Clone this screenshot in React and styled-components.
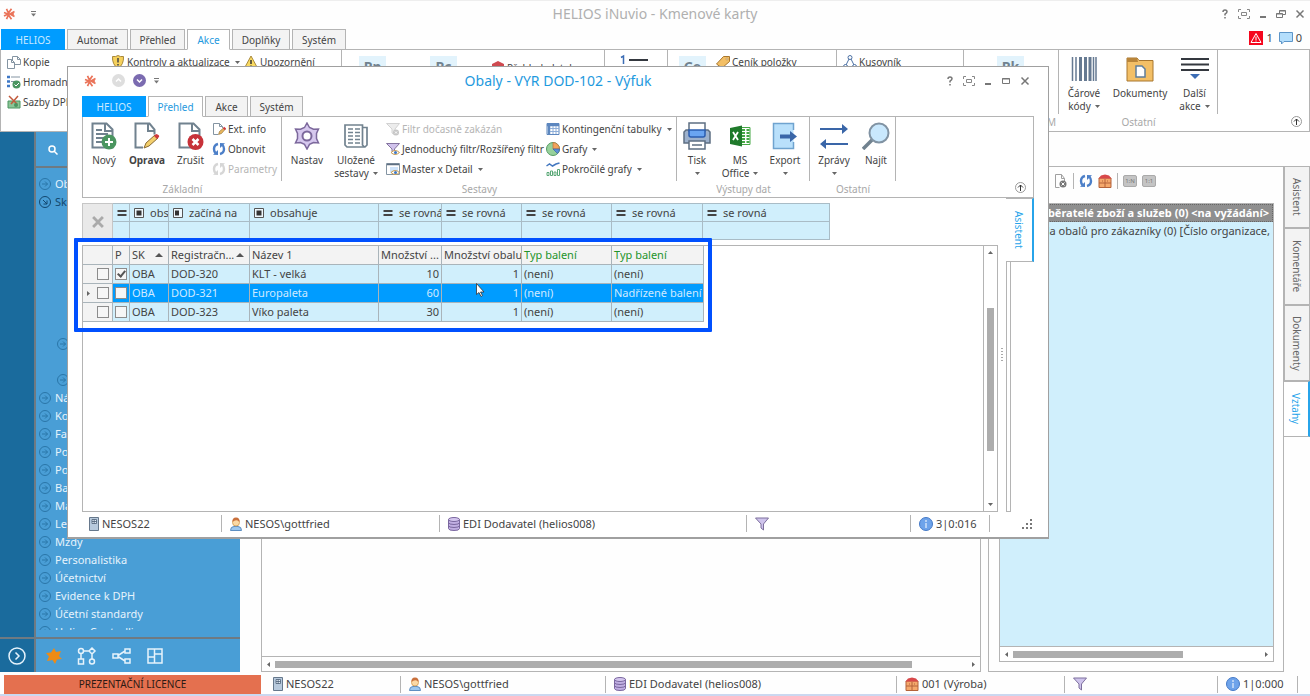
import React from 'react';
import styled, { createGlobalStyle, css } from 'styled-components';

const GlobalStyle = createGlobalStyle`
  * {
    box-sizing: border-box;
  }

  body {
    margin: 0;
    background: #fefefe;
    color: #444;
    font-family: 'Noto Sans', 'Open Sans', sans-serif;
    font-size: 11px;
    line-height: 14px;
  }

  button,
  input {
    font: inherit;
    color: inherit;
  }

  button {
    padding: 0;
    border: none;
    background: none;
    cursor: pointer;
  }

  ul {
    list-style: none;
    margin: 0;
    padding: 0;
  }
`;

const line = '#b4b4b4';

/* ---------- icons ---------- */

const Svg = styled.svg`
  display: block;
  flex: none;
  fill: none;
`;

const Star = ({ size = 12, color = '#ea7359' }) => (
  <Svg width={size} height={size} viewBox="0 0 12 12" stroke={color} strokeWidth="1.7">
    <path d="M1 4.500 5 6 1 8M3.500.8 5.500 5 8.500.8M3.500 11.200 5.500 7l3 4.200M11.500 3.500 7 6l4.500 2.500M4 6h7" />
  </Svg>
);

const Caret = ({ color = '#666' }) => (
  <Svg width="5" height="3" viewBox="0 0 5 3">
    <path d="M0 0h5L2.500 3z" fill={color} />
  </Svg>
);

const MenuCaret = () => (
  <Svg width="5" height="6" viewBox="0 0 5 6">
    <path d="M0 .5h5" stroke="#777" />
    <path d="M0 2.500h5L2.500 5.500z" fill="#777" />
  </Svg>
);

const sheet = 'M1.500 1.500h14l6 6v18h-20z';

const Refresh = ({ color }) => (
  <Svg width="14" height="14" viewBox="0 0 14 14">
    <path d="M6 2Q2 3 2 7q0 2.500 1.500 4M8 12q4-1 4-5 0-2.500-1.500-4" stroke={color} strokeWidth="2.400" />
    <path d="M1 12.800 6 13V8zM13 1.200 8 1v5z" fill={color} />
  </Svg>
);

const icons = {
  novy: (
    <Svg width="26" height="28" viewBox="0 0 26 28">
      <path d={sheet} fill="#fff" stroke="#71828f" strokeWidth="2" />
      <path d="M14 1v8h8" stroke="#71828f" strokeWidth="2" />
      <path d="M5 8h6M5 12h12M5 16h9M5 20h7" stroke="#71828f" strokeWidth="2" />
      <circle cx="18" cy="20" r="7.500" fill="#4b9560" />
      <path d="M18 16v8M14 20h8" stroke="#fff" strokeWidth="2" />
    </Svg>
  ),
  oprava: (
    <Svg width="26" height="28" viewBox="0 0 26 28">
      <path d="M9 25.500H1.500v-24h14l5 6v5" fill="#fff" stroke="#71828f" strokeWidth="2" />
      <path d="M14 1v8h7" stroke="#71828f" strokeWidth="2" />
      <path d="m10 26 2-5 9-8 3 3-9 8z" fill="#f3cf6c" stroke="#8a6a34" />
      <path d="m20 14 2-2q4 1 3 3l-2 2z" fill="#d0393e" />
    </Svg>
  ),
  zrusit: (
    <Svg width="26" height="28" viewBox="0 0 26 28">
      <path d={sheet} fill="#fff" stroke="#71828f" strokeWidth="2" />
      <path d="M14 1v8h8" stroke="#71828f" strokeWidth="2" />
      <circle cx="17.500" cy="20" r="8" fill="#c73239" />
      <path d="m14.500 17 6 6M20.500 17l-6 6" stroke="#fff" strokeWidth="2.500" />
    </Svg>
  ),
  nastav: (
    <Svg width="28" height="28" viewBox="0 0 28 28">
      <path
        d="M14 1l2.500 4.500 4 1.800L25.500 7l-2 4.500v5l2 4.500-5-.5-4 1.800L14 27l-2.500-4.700-4-1.800-5 .5 2-4.500v-5L2.500 7l5 .3 4-1.800z"
        fill="#d6c8ee"
        stroke="#7c689c"
        strokeWidth="1.500"
      />
      <circle cx="14" cy="14" r="4.500" fill="#fff" stroke="#7c689c" strokeWidth="2" />
    </Svg>
  ),
  sestavy: (
    <Svg width="26" height="28" viewBox="0 0 26 28" stroke="#71828f">
      <path d="M19.500 5.500h4.500V23l-2 2H4l-2-2V3h17.500v20l2 2" fill="#fff" strokeWidth="1.700" />
      <path d="M5 7h5M12 7h5M5 10.500h5M12 10.500h5M5 14h5M12 14h5M5 17.500h5M12 17.500h5M5 21h5M12 21h5" strokeWidth="1.500" />
    </Svg>
  ),
  tisk: (
    <Svg width="28" height="28" viewBox="0 0 28 28" strokeWidth="1.500">
      <path d="M3 8h22l2 2v11H1V10z" fill="#9db1cc" stroke="#5e6f82" />
      <path d="M6 1h16v8H6z" fill="#fff" stroke="#5e6f82" />
      <path d="M6 8h16v5q0 2-2 2H8q-2 0-2-2z" fill="#6aa5f2" stroke="#2b5db0" />
      <path d="M6 19h16v8H6z" fill="#fff" stroke="#5e6f82" />
      <path d="M9 23h10" stroke="#5e6f82" />
    </Svg>
  ),
  office: (
    <Svg width="22" height="28" viewBox="0 0 22 28">
      <path d="M12 5.500h9v17h-9z" fill="#fff" stroke="#45a845" />
      <path d="M13 8h3M17.500 8h3M13 11h3M17.500 11h3M13 14h3M17.500 14h3M13 17h3M17.500 17h3M13 20h3M17.500 20h3" stroke="#45a845" strokeWidth="2" />
      <path d="M1 6 13 3.500v21L1 22z" fill="#1f7a2b" />
      <path d="m4 10 5 8M9 10l-5 8" stroke="#fff" strokeWidth="1.800" />
    </Svg>
  ),
  export: (
    <Svg width="26" height="28" viewBox="0 0 26 28">
      <path d="M21.500 8V1.500h-20v25h20V20" fill="#b9e0fb" stroke="#6fa3cf" strokeWidth="1.500" />
      <path d="M8 12.500h10V9l7 5.500-7 5.500v-3.500H8z" fill="#3a66a8" />
    </Svg>
  ),
  zpravy: (
    <Svg width="28" height="28" viewBox="0 0 28 28">
      <path d="M0 7h22M6 22h22" stroke="#3a66a8" strokeWidth="1.800" />
      <path d="m22 2 6 5-6 5zM6 17l-6 5 6 5z" fill="#3a66a8" />
    </Svg>
  ),
  najit: (
    <Svg width="28" height="28" viewBox="0 0 28 28">
      <path d="m10 18-9 9" stroke="#71828f" strokeWidth="3.500" />
      <circle cx="17" cy="11" r="9.500" fill="#c9e8fd" stroke="#8193a3" strokeWidth="2" />
    </Svg>
  ),
  carove: (
    <Svg width="26" height="28" viewBox="0 0 26 28" stroke="#667a92">
      <path d="M1.500 2v24M22.500 2v24M25 2v24M5 2v24" strokeWidth="1.500" />
      <path d="M9.500 2v24M14.500 2v24M19 2v24" strokeWidth="3" />
    </Svg>
  ),
  dokumenty: (
    <Svg width="28" height="28" viewBox="0 0 28 28">
      <path d="M1 3h10l2 2.500h14V26H1z" fill="#f3bf66" stroke="#a8772f" />
      <path d="M1 3h10l1 4H1z" fill="#b9853a" />
      <path d="M10 11h6l3 3v8h-9z" fill="#fff" stroke="#5f7e9a" strokeWidth="1.500" />
    </Svg>
  ),
  dalsi: (
    <Svg width="28" height="28" viewBox="0 0 28 28">
      <path d="M0 4h28M0 9.500h28M0 15h28" stroke="#34383f" strokeWidth="1.800" />
      <path d="M9 19h10l-5 5z" fill="#3c6db5" />
    </Svg>
  ),
  info: (
    <Svg width="14" height="14" viewBox="0 0 14 14">
      <path d="M6 12.500H1.500v-11h6l3 3V6M7.500 1.500v3h3" stroke="#8494a2" />
      <path d="m6.500 12.500 1-3 4-3.500 1.500 1.500-3.500 4z" fill="#e8b65c" stroke="#8a6a34" strokeWidth=".6" />
      <path d="m11.500 5.500 2 2" stroke="#d0393e" strokeWidth="2" />
    </Svg>
  ),
  obnovit: <Refresh color="#4c7fc8" />,
  parametry: <Refresh color="#d6d6d6" />,
  filtrOff: (
    <Svg width="14" height="14" viewBox="0 0 14 14">
      <path d="M.5 1.500h13L9 7v6L6 11V7z" fill="#ececec" stroke="#d2d2d2" />
      <circle cx="10" cy="10.500" r="3" fill="#c6c6c6" />
      <path d="m9 9.500 2 2M11 9.500l-2 2" stroke="#fff" />
    </Svg>
  ),
  filtr: (
    <Svg width="14" height="14" viewBox="0 0 14 14">
      <path d="M.5 1.500h13L8.500 7v4L6 9.500V7z" fill="#d0c2ec" stroke="#84749f" />
      <path d="M5 10.500q4-4 8.500 0-4.500 4-8.500 0z" fill="#fff" stroke="#c89a4c" />
      <circle cx="9.500" cy="10.500" r="1.500" fill="#3e78c6" />
    </Svg>
  ),
  master: (
    <Svg width="14" height="14" viewBox="0 0 14 14">
      <path d="M.5 1.500h13v11H.5z" fill="#fff" stroke="#8494a2" />
      <path d="M1 2.500h12" stroke="#5e6f82" strokeWidth="1.500" />
      <path d="M4 5h8v6H4z" fill="#cfe4fb" />
      <path d="M5 10.500q4-4 8.500 0-4.500 4-8.500 0z" fill="#fff" stroke="#c89a4c" />
      <circle cx="9.500" cy="10.500" r="1.500" fill="#3e78c6" />
    </Svg>
  ),
  tabulky: (
    <Svg width="14" height="14" viewBox="0 0 14 14">
      <path d="M1 1.500h12v11H1z" fill="#fff" stroke="#5d87bf" />
      <path d="M1 3h12M3 2v10" stroke="#5d87bf" strokeWidth="2.500" />
      <path d="M4 6.500h9M4 9.500h9M7 4v8M10 4v8" stroke="#8eaed8" />
    </Svg>
  ),
  grafy: (
    <Svg width="14" height="14" viewBox="0 0 14 14">
      <circle cx="7" cy="7" r="6.500" fill="#97d19b" stroke="#579a63" />
      <path d="M7 7V.5A6.500 6.500 0 0 1 13.500 7z" fill="#f3a35c" stroke="#b9713b" strokeWidth=".7" />
      <path d="M7 7h6.500a6.500 6.500 0 0 1-2 4.500z" fill="#5d90d8" stroke="#3b66a6" strokeWidth=".7" />
    </Svg>
  ),
  pokrocile: (
    <Svg width="14" height="14" viewBox="0 0 14 14">
      <path d="m.5 4 3-2 3 2 3.500-2 3.500-1" stroke="#4478c0" strokeWidth="1.500" />
      <path d="M1 13.500v-3h2v3zM4.500 13.500V9h2v4.500zM8 13.500V10h2v3.500zM11.500 13.500v-6h2v6z" stroke="#5aa877" />
    </Svg>
  ),
  kopie: (
    <Svg width="14" height="14" viewBox="0 0 14 14" stroke="#8494a2">
      <path d="M5.500 9.500v-8h5l3 3v5z" fill="#fff" />
      <path d="M.5 13.500v-9h4l3 3v6z" fill="#fff" />
      <path d="M4.500 4.500v3h3M10.500 1.500v3h3" />
    </Svg>
  ),
  hromadne: (
    <Svg width="14" height="14" viewBox="0 0 14 14">
      <path d="M0 2h3M0 6.500h3M0 11h3" stroke="#3e78c6" strokeWidth="2.500" />
      <path d="M4 2h9M4 6.500h5" stroke="#8494a2" />
      <circle cx="9.500" cy="9.500" r="4" fill="#4b9560" />
      <path d="m7.500 9.500 1.500 1.500 3-3" stroke="#fff" />
    </Svg>
  ),
  sazby: (
    <Svg width="14" height="14" viewBox="0 0 14 14">
      <path d="M1 6h12v7H1z" fill="#8bc596" stroke="#4b9560" />
      <path d="m2 1 8 8M11 1 4 9" stroke="#c25a3c" strokeWidth="1.500" />
      <circle cx="9" cy="10" r="2" fill="#4b9560" />
    </Svg>
  ),
  kontroly: (
    <Svg width="14" height="14" viewBox="0 0 14 14">
      <path d="M1.500 1.500Q5 2 7 .5q2 1.500 5.500 1 .5 8-5.500 12-6-4-5.500-12z" fill="#f6d15c" stroke="#a8883a" />
      <path d="M7 3v4.500M7 9v1.500" stroke="#444" strokeWidth="1.500" />
    </Svg>
  ),
  upozorneni: (
    <Svg width="14" height="14" viewBox="0 0 14 14">
      <path d="m7 1 6.500 12H.5z" fill="#f9da62" stroke="#a8883a" />
      <path d="M7 5v4M7 10.500V12" stroke="#333" strokeWidth="1.500" />
    </Svg>
  ),
  platby: (
    <Svg width="14" height="14" viewBox="0 0 14 14">
      <path d="m7 0 6 3v8l-6 3-6-3V3z" fill="#cf4a50" />
    </Svg>
  ),
  cenik: (
    <Svg width="14" height="14" viewBox="0 0 14 14">
      <path d="m.5 9 7-7.500h6v5L6 13z" fill="#f3bf66" stroke="#a8772f" />
      <circle cx="11" cy="4" r="1" fill="#fff" stroke="#a8772f" strokeWidth=".6" />
    </Svg>
  ),
  kusovnik: (
    <Svg width="14" height="14" viewBox="0 0 14 14" stroke="#4d72a5">
      <path d="M6 4 3 10M8 4l3 6M4 12h6" />
      <circle cx="7" cy="2.500" r="2" />
      <circle cx="2.500" cy="11.500" r="2" />
      <circle cx="11.500" cy="11.500" r="2" />
    </Svg>
  ),
  server: (
    <Svg width="10" height="14" viewBox="0 0 10 14">
      <path d="M.5.500h9v13h-9z" fill="#b8cadd" stroke="#66788c" />
      <path d="M3 2.500h4.500v4H3zM3 4.500h4.500M5.200 2.500v4" fill="#e4eef8" stroke="#4d6076" strokeWidth=".8" />
    </Svg>
  ),
  user: (
    <Svg width="12" height="14" viewBox="0 0 12 14">
      <path d="M.5 13.500q0-4 3.500-4h4q3.500 0 3.500 4z" fill="#9cc7ef" stroke="#5d8fc2" />
      <circle cx="6" cy="5.500" r="3.500" fill="#fbd9a5" stroke="#d09a4c" strokeWidth=".8" />
      <path d="M2.500 5Q2 .5 6 .5t3.500 4.500Q8 2.500 5 3.500 3 4 2.500 5z" fill="#c9703c" />
    </Svg>
  ),
  db: (
    <Svg width="12" height="14" viewBox="0 0 12 14" stroke="#7a679f">
      <path d="M.5 2.500v9q0 2 5.500 2t5.500-2v-9z" fill="#c0aee2" />
      <ellipse cx="6" cy="2.500" rx="5.500" ry="2" fill="#d3c5ee" />
      <path d="M.5 5.500q0 2 5.500 2t5.500-2M.5 8.500q0 2 5.500 2t5.500-2" />
    </Svg>
  ),
  funnel: (
    <Svg width="14" height="14" viewBox="0 0 14 14">
      <path d="M.5 1h13L8.500 7v6L6 11V7z" fill="#cfc4ec" stroke="#7d6f9d" />
    </Svg>
  ),
  count: (
    <Svg width="14" height="14" viewBox="0 0 14 14">
      <circle cx="7" cy="7" r="6.500" fill="#6ea3ea" stroke="#4479c6" />
      <path d="M7 3v2M7 6v5" stroke="#fff" />
    </Svg>
  ),
  house: (
    <Svg width="14" height="14" viewBox="0 0 14 14">
      <path d="M1 4h12v9.500H1z" fill="#f5a86c" stroke="#b4633a" />
      <path d="M7 5v8M1 9h12M4 7h1M9 7h1" stroke="#b4633a" />
      <path d="M.5 4.500 3 1.500 7 .5l4 1 2.500 3H.5z" fill="#d8484a" />
    </Svg>
  ),
  docX: (
    <Svg width="14" height="14" viewBox="0 0 14 14">
      <path d="M1.500 13.500v-13h6l3 4v3M1.500 13.500h4M7.500.5v4h3" stroke="#a0a0a0" />
      <circle cx="9" cy="10" r="3.500" fill="#777" />
      <path d="m7.500 8.500 3 3M10.500 8.500l-3 3" stroke="#fff" />
    </Svg>
  ),
};

const HelpIcon = () => (
  <Svg width="8" height="10" viewBox="0 0 8 10" stroke="#777" strokeWidth="1.500">
    <path d="M2 3q0-2 2-2t2 1.800Q6 4 4 5.200V6.500M4 8v1.500" />
  </Svg>
);
const FullIcon = () => (
  <Svg width="12" height="10" viewBox="0 0 12 10" stroke="#888">
    <path d="M.5 3V.500H3M9 .500h2.500V3M11.500 7v2.500H9M3 9.500H.5V7M3.500 3.500h5v3h-5z" />
  </Svg>
);
const MinIcon = () => (
  <Svg width="8" height="10" viewBox="0 0 8 10">
    <path d="M1 8h6" stroke="#777" strokeWidth="2" />
  </Svg>
);
const MaxIcon = () => (
  <Svg width="10" height="10" viewBox="0 0 10 10" stroke="#777">
    <path d="M1.500 2.500h7v5h-7zM1 3h8" />
  </Svg>
);
const RestoreIcon = () => (
  <Svg width="10" height="10" viewBox="0 0 10 10" stroke="#777">
    <path d="M3.500 4V1.500h6v4H7M.5 4.500h6v4h-6zM.5 5h6M3.500 2h6" />
  </Svg>
);
const CloseIcon = ({ size = 10, color = '#777', width = 1.5 }) => (
  <Svg width={size} height={size} viewBox="0 0 10 10" stroke={color} strokeWidth={width}>
    <path d="m1.500 1.500 7 7M8.500 1.500l-7 7" />
  </Svg>
);
const ArrowCircle = ({ down }) => (
  <Svg width="12" height="12" viewBox="0 0 12 12" stroke={down ? '#12476e' : '#2a76a8'}>
    <circle cx="6" cy="6" r="5.500" />
    <path d={down ? 'm4 4 4 4M8 4.500V8H4.500' : 'M3 6h5.500M6 3.500 8.500 6 6 8.500'} />
  </Svg>
);

/* ---------- shared parts ---------- */

const TitleBar = styled.header`
  display: grid;
  grid-template-columns: 1fr auto 1fr;
  align-items: center;
  height: ${(p) => p.$height}px;
  padding: 0 ${(p) => p.$side}px 2px;
`;

const Title = styled.h1`
  margin: 0;
  font-size: 14px;
  font-weight: 400;
  line-height: 20px;
  color: ${(p) => p.$color};
`;

const QuickAccess = styled.div`
  display: flex;
  align-items: center;
  gap: 8px;
`;

const RoundButton = styled.button`
  display: grid;
  place-items: center;
  width: 13px;
  height: 13px;
  border-radius: 50%;
  background: ${(p) => p.$bg};
`;

const WindowButtons = styled.div`
  display: flex;
  justify-content: flex-end;
  align-items: center;
  gap: 9px;
  padding-right: 2px;
`;

const Tabs = styled.nav`
  display: flex;
  gap: 2px;
  height: 21px;
  padding-left: ${(p) => p.$left}px;
  margin-bottom: -1px;
  position: relative;
`;

const Tab = styled.button`
  min-width: ${(p) => p.$width}px;
  border: 1px solid ${line};
  background: #f3f3f3;
  color: #444;
  font-size: 10px;

  ${(p) =>
    p.$active &&
    css`
      background: #fff;
      border-bottom-color: #fff;
      color: #1f9ade;
    `}

  ${(p) =>
    p.$brand &&
    css`
      background: #009cff;
      border-color: #009cff;
      color: #c9e9ff;
    `}
`;

const RibbonBar = styled.section`
  display: flex;
  height: ${(p) => p.$height}px;
  border: 1px solid ${line};
  background: #fff;
  font-size: 10px;
`;

const Group = styled.div`
  display: flex;
  flex-direction: column;
  flex: none;
  width: ${(p) => p.$width}px;
`;

const GroupBody = styled.div`
  display: flex;
  height: 64px;
  gap: ${(p) => p.$gap || 0}px;
  padding: 2px 0 0 ${(p) => p.$left || 0}px;
  border-right: 1px solid ${line};
`;

const GroupLabel = styled.div`
  text-align: center;
  line-height: 16px;
  color: #a8a8a8;
`;

const BigButton = styled.button`
  display: flex;
  flex-direction: column;
  align-items: center;
  flex: none;
  width: ${(p) => p.$width}px;
  padding-top: 3px;
  line-height: 13px;
  font-weight: ${(p) => (p.$bold ? 700 : 400)};

  > svg {
    margin-bottom: 4px;
  }
`;

const LastLine = styled.span`
  display: flex;
  align-items: center;
  justify-content: center;
  gap: 4px;
  min-height: 13px;
`;

const Stack = styled.div`
  display: flex;
  flex-direction: column;
  flex: none;
  width: ${(p) => p.$width}px;
  padding-left: ${(p) => p.$left || 0}px;
`;

const SmallButton = styled.button`
  display: flex;
  align-items: center;
  gap: 2px;
  height: 20px;
  white-space: nowrap;
  color: ${(p) => (p.disabled ? '#b5b5b5' : '#444')};

  > svg:last-child:not(:first-child) {
    margin-left: 3px;
  }
`;

const Collapse = styled.button`
  display: grid;
  place-items: center;
  align-self: flex-end;
  width: 11px;
  height: 11px;
  margin: 0 7px 4px auto;
  border: 1px solid #999;
  border-radius: 50%;
`;

const Big = ({ icon, width, bold, label, last, caret }) => (
  <BigButton $width={width} $bold={bold}>
    {icons[icon]}
    <span>{label}</span>
    {(last || caret) && (
      <LastLine>
        {last}
        {caret && <Caret />}
      </LastLine>
    )}
  </BigButton>
);

const Small = ({ icon, label, caret, disabled }) => (
  <SmallButton disabled={disabled}>
    {icons[icon]}
    <span>{label}</span>
    {caret && <Caret />}
  </SmallButton>
);

const CollapseButton = () => (
  <Collapse aria-label="Sbalit pás karet">
    <Svg width="7" height="7" viewBox="0 0 7 7" stroke="#333">
      <path d="M3.500 7V1M1 3.500 3.500 1 6 3.500" />
    </Svg>
  </Collapse>
);

const StatusBar = styled.footer`
  display: flex;
  align-items: center;
  flex: none;
  height: 22px;
  padding-top: 2px;
`;

const StatusCell = styled.div`
  display: flex;
  align-items: center;
  gap: 3px;
  flex: none;
  height: 17px;
  width: ${(p) => p.$width}px;
  padding-left: ${(p) => (p.$first ? 7 : 8)}px;
  border-right: 1px solid ${line};
  white-space: nowrap;
`;

const ScrollBar = styled.div`
  display: flex;
  flex: none;
  align-items: center;
  justify-content: space-between;
  gap: 4px;
  padding: 4px;
  border: 0 solid ${line};
  ${(p) =>
    p.$vertical
      ? css`
          flex-direction: column;
          width: 14px;
          border-left-width: 1px;
        `
      : css`
          height: 15px;
          border-top-width: 1px;
        `}
`;

const Track = styled.div`
  display: flex;
  flex: 1;
  flex-direction: ${(p) => (p.$vertical ? 'column' : 'row')};
`;

const Thumb = styled.div`
  background: #adadad;
  ${(p) =>
    p.$vertical
      ? css`
          width: 7px;
          height: ${p.$size}%;
          margin-top: ${p.$start}px;
        `
      : css`
          height: 7px;
          width: ${p.$size}%;
        `}
`;

const Arrow = ({ d }) => (
  <Svg width="5" height="5" viewBox="0 0 5 5">
    <path d={d} fill="#666" />
  </Svg>
);

const HScroll = ({ size }) => (
  <ScrollBar>
    <Arrow d="M4 0v5L1 2.500z" />
    <Track>
      <Thumb $size={size} />
    </Track>
    <Arrow d="M1 0v5l3-2.500z" />
  </ScrollBar>
);

const SideTabs = styled.div`
  display: flex;
  flex-direction: column;
  flex: none;
  width: ${(p) => p.$width}px;
`;

const SideTab = styled.button`
  height: ${(p) => p.$height}px;
  border: 1px solid ${line};
  border-left: ${(p) => (p.$active ? 'none' : `1px solid ${line}`)};
  border-right: ${(p) => (p.$active ? '2px solid #27a4ea' : `1px solid ${line}`)};
  background: ${(p) => (p.$active ? '#fff' : '#f3f3f3')};
  color: ${(p) => (p.$active ? '#27a4ea' : '#666')};
  font-size: 10px;
  writing-mode: vertical-rl;
  text-align: center;
`;

/* ---------- main window ---------- */

const Desktop = styled.div`
  position: relative;
  display: flex;
  flex-direction: column;
  min-height: 100vh;
  border-top: 1px solid #eee;
  border-bottom: 2px solid #cbd8f0;
  overflow: hidden;
`;

const TabLine = styled.div`
  display: flex;
  justify-content: space-between;
`;

const Alerts = styled.div`
  display: flex;
  align-items: center;
  gap: 3px;
  padding-right: 8px;
  height: 18px;
`;

const Tile = styled.div`
  flex: none;
  width: 27px;
  height: 24px;
  margin-top: 4px;
  margin-left: ${(p) => p.$left}px;
  background: #e2f3fc;
  color: #71828f;
  font-size: 14px;
  font-weight: 700;
  line-height: 22px;
  text-align: center;
`;

const Body = styled.div`
  display: flex;
  flex: 1;
`;

const Rail = styled.aside`
  display: flex;
  flex-direction: column;
  justify-content: flex-end;
  flex: none;
  width: 36px;
  background: #1a6b9d;
  border-right: 2px solid #6f7a82;
`;

const RailButton = styled.button`
  display: grid;
  place-items: center;
  height: 35px;
  border-top: 2px solid #6f7a82;
`;

const Sidebar = styled.aside`
  display: flex;
  flex-direction: column;
  flex: none;
  width: 204px;
  background: #499ed6;
  color: #e6f3fc;
`;

const SearchBar = styled.div`
  flex: none;
  height: 36px;
  padding: 12px 12px 0;
  border-bottom: 2px solid #6f7a82;
`;

const Menu = styled.ul`
  flex: 1 1 0;
  min-height: 0;
  overflow: hidden;
  padding-top: 7px;
  margin-bottom: 7px;
`;

const MenuItem = styled.li`
  height: 18px;

  a {
    display: flex;
    align-items: center;
    gap: 4px;
    height: 18px;
    padding-left: 3px;
    color: ${(p) => (p.$open ? '#12476e' : '#e6f3fc')};
    text-decoration: none;
    white-space: nowrap;
  }
`;

const SubMenu = styled.ul`
  display: flex;
  flex-direction: column;
  gap: 18px;
  padding: 124px 0 0 18px;
`;

const SideTools = styled.div`
  display: flex;
  align-items: center;
  gap: 15px;
  flex: none;
  height: 35px;
  padding-left: 10px;
  border-top: 2px solid #6f7a82;
`;

const Content = styled.main`
  display: flex;
  flex: 1;
  min-width: 0;
  padding: 34px 0 0 21px;
`;

const ListPane = styled.section`
  display: flex;
  flex-direction: column;
  flex: 1;
  min-width: 0;
  margin-right: 7px;
  border: 1px solid ${line};
`;

const Fill = styled.div`
  flex: 1;
`;

const RelationPane = styled.section`
  display: flex;
  flex-direction: column;
  flex: none;
  width: 296px;
  padding: 0 9px 9px 10px;
  border: 1px solid ${line};
`;

const PaneTools = styled.div`
  display: flex;
  align-items: center;
  gap: 5px;
  height: 28px;
  margin-bottom: 8px;
  padding-left: 55px;
`;

const Divider = styled.span`
  width: 1px;
  height: 16px;
  background: ${line};
`;

const Badge = styled.button`
  width: 14px;
  height: 12px;
  border: 1px solid #aaa;
  border-radius: 2px;
  background: #c4c4c4;
  color: #777;
  font-size: 6px;
  line-height: 8px;
`;

const Tree = styled.div`
  display: flex;
  flex-direction: column;
  flex: 1;
  border: 1px solid ${line};
  background: #fff;
`;

const TreeBody = styled.div`
  flex: 1;
  background: #d0effc;
`;

const TreeRow = styled.div`
  display: flex;
  justify-content: flex-end;
  height: 18px;
  padding-right: 3px;
  overflow: hidden;
  white-space: nowrap;
  line-height: 18px;
  ${(p) =>
    p.$head &&
    css`
      background: #8f8f8f;
      border: 1px dotted #666;
      color: #fff;
      font-weight: 700;
      line-height: 16px;
    `}
`;

const Licence = styled.div`
  flex: none;
  width: 257px;
  height: 19px;
  margin: 0 4px 0 4px;
  background: #e4704f;
  color: #2d1a14;
  font-size: 10px;
  line-height: 19px;
  text-align: center;
`;

/* ---------- dialog ---------- */

const Dialog = styled.div`
  position: absolute;
  top: 65px;
  right: 261px;
  bottom: 155px;
  left: 67px;
  display: flex;
  flex-direction: column;
  padding: 0 14px;
  border: 1px solid #a0a0a0;
  border-bottom-width: 2px;
  background: #fff;
`;

const DialogBody = styled.div`
  display: flex;
  flex: 1;
  min-height: 0;
`;

const Work = styled.div`
  display: flex;
  flex-direction: column;
  flex: 1;
  min-width: 0;
  padding-top: 5px;
`;

const columns = '17px 39px 81px 129px 63px 80px 90px 91px 127px';

const FilterRow = styled.div`
  display: flex;
  height: 37px;
  margin-bottom: 5px;
`;

const ClearFilter = styled.button`
  display: grid;
  place-items: center;
  width: 31px;
  border: 1px solid #c6c6c6;
  background: #e9e9e9;
`;

const FilterGrid = styled.div`
  display: grid;
  grid-template-columns: ${columns};
  border-top: 1px solid #a9bcc6;
`;

const FilterCell = styled.div`
  display: flex;
  flex-direction: column;
  min-width: 0;
  border-right: 1px solid #a9bcc6;
  border-bottom: 1px solid #a9bcc6;
  background: #d0effc;

  button {
    display: flex;
    align-items: center;
    gap: 6px;
    height: 18px;
    padding-left: 4px;
    overflow: hidden;
    white-space: nowrap;
    border-bottom: 1px solid #a9bcc6;
  }

  input {
    width: 100%;
    height: 17px;
    padding: 0 3px;
    border: none;
    background: none;
  }
`;

const GridPane = styled.div`
  position: relative;
  display: flex;
  flex: 1;
  border: 1px solid ${line};
`;

const DataTable = styled.table`
  width: 621px;
  table-layout: fixed;
  border-collapse: separate;
  border-spacing: 0;

  th,
  td {
    height: 19px;
    padding: 0 0 0 2px;
    border-right: 1px solid #a9b4ba;
    border-bottom: 1px solid #a9b4ba;
    overflow: hidden;
    white-space: nowrap;
    text-align: left;
    font-weight: 400;
  }

  th {
    background: #f3f3f3;
  }
`;

const Row = styled.tr`
  background: ${(p) => (p.$selected ? '#009cff' : '#d0effc')};
  color: ${(p) => (p.$selected ? '#cfeaff' : '#444')};
`;

const RowHead = styled.th`
  > div {
    display: flex;
    align-items: center;
    justify-content: flex-end;
    gap: 6px;
    padding-right: 3px;
  }
`;

const HeadLabel = styled.div`
  display: flex;
  align-items: center;
  justify-content: space-between;
  padding-right: ${(p) => (p.$sort ? 5 : 0)}px;
  color: ${(p) => (p.$green ? '#23942a' : '#444')};
`;

const Num = styled.td`
  && {
    padding-right: 2px;
    text-align: right;
  }
`;

const Check = styled.input.attrs({ type: 'checkbox' })`
  appearance: none;
  display: block;
  flex: none;
  width: 12px;
  height: 12px;
  margin: 0;
  border: 1px solid #8c8c8c;
  background: #f6f6f6;

  &:checked::after {
    content: '';
    display: block;
    width: 3px;
    height: 6px;
    margin: 0 0 0 3px;
    border: solid #555;
    border-width: 0 2px 2px 0;
    transform: rotate(40deg);
  }
`;

const Highlight = styled.div`
  position: absolute;
  top: -8px;
  left: -9px;
  width: 638px;
  height: 94px;
  border: 4px solid #0050ff;
  border-radius: 1px;
  pointer-events: none;
`;

const Cursor = styled.svg`
  position: absolute;
  top: 37px;
  left: 393px;
`;

const Splitter = styled.div`
  display: flex;
  align-items: center;
  justify-content: center;
  flex: none;
  width: 8px;
`;

const Assistant = styled.div`
  display: flex;
  flex-direction: column;
  width: 28px;

  &::after {
    content: '';
    flex: 1;
    width: 3px;
    border: 1px solid ${line};
    border-top: none;
  }
`;

const StatusFooter = styled(StatusBar)`
  height: 25px;
  padding: 0 0 2px;
`;

const Spacer = styled.span`
  flex: 1;
`;

const Gap = styled.span`
  width: 0;
`;

const CondIcon = ({ kind }) =>
  kind === 'eq' ? (
    <Svg width="10" height="10" viewBox="0 0 10 10" stroke="#444" strokeWidth="2">
      <path d="M.5 3h9M.5 7h9" />
    </Svg>
  ) : (
    <Svg width="10" height="10" viewBox="0 0 10 10">
      <path d="M.5.500h9v9h-9z" stroke="#555" fill="#eef8fd" />
      <path d={kind === 'start' ? 'M2 2.500h4v5H2z' : 'M2.500 2.500h5v5h-5z'} fill="#333" />
    </Svg>
  );

const filters = [
  ['eq', ''],
  ['in', 'obsahuje'],
  ['start', 'začíná na'],
  ['in', 'obsahuje'],
  ['eq', 'se rovná'],
  ['eq', 'se rovná'],
  ['eq', 'se rovná'],
  ['eq', 'se rovná'],
  ['eq', 'se rovná'],
];

const heads = [
  { label: 'P' },
  { label: 'SK', sort: true },
  { label: 'Registračn...', sort: true },
  { label: 'Název 1' },
  { label: 'Množství ...' },
  { label: 'Množství obalu' },
  { label: 'Typ balení', green: true },
  { label: 'Typ balení', green: true },
];

const rows = [
  { checked: true, sk: 'OBA', reg: 'DOD-320', name: 'KLT - velká', qty: 10, pack: 1, type: '(není)', parent: '(není)' },
  { selected: true, sk: 'OBA', reg: 'DOD-321', name: 'Europaleta', qty: 60, pack: 1, type: '(není)', parent: 'Nadřízené balení' },
  { sk: 'OBA', reg: 'DOD-323', name: 'Víko paleta', qty: 30, pack: 1, type: '(není)', parent: '(není)' },
];

const menu = [
  'Nákup',
  'Komunikace',
  'Fakturace',
  'Pokladna',
  'Pohledávky',
  'Banka',
  'Majetek',
  'Leasing',
  'Mzdy',
  'Personalistika',
  'Účetnictví',
  'Evidence k DPH',
  'Účetní standardy',
  'Helios Controlling',
];

const Controls = ({ restore }) => (
  <WindowButtons>
    <button aria-label="Nápověda"><HelpIcon /></button>
    <button aria-label="Celá obrazovka"><FullIcon /></button>
    <button aria-label="Minimalizovat"><MinIcon /></button>
    <button aria-label="Maximalizovat">{restore ? <RestoreIcon /> : <MaxIcon />}</button>
    <button aria-label="Zavřít"><CloseIcon /></button>
  </WindowButtons>
);

const PaymentButton = styled(SmallButton)`
  height: 32px;
  padding-left: 34px;
`;

const RightLabel = styled(GroupLabel)`
  text-align: right;
  padding-right: 3px;
`;

const MainRibbon = () => (
  <RibbonBar $height={83}>
    <Group $width={341}>
      <GroupBody $left={6} $gap={6}>
        <Stack $width={98}>
          <Small icon="kopie" label="Kopie" />
          <Small icon="hromadne" label="Hromadné" />
          <Small icon="sazby" label="Sazby DPH" />
        </Stack>
        <Stack $width={127}>
          <Small icon="kontroly" label="Kontroly a aktualizace" caret />
        </Stack>
        <Stack $width={80}>
          <Small icon="upozorneni" label="Upozornění" />
        </Stack>
      </GroupBody>
    </Group>
    <Group $width={263}>
      <GroupBody>
        <Tile $left={17}>Pp</Tile>
        <Tile $left={44}>Pc</Tile>
        <Stack $width={120}>
          <PaymentButton>
            {icons.platby}
            <span>Přehled plateb</span>
          </PaymentButton>
        </Stack>
      </GroupBody>
    </Group>
    <Group $width={63}>
      <GroupBody $left={15}>
        <Svg width="30" height="16" viewBox="0 0 30 16">
          <path d="M1 5.500 3.500 4v8" stroke="#3c6db5" strokeWidth="1.500" />
          <path d="M9 8h19" stroke="#34383f" strokeWidth="2" />
        </Svg>
      </GroupBody>
    </Group>
    <Group $width={169}>
      <GroupBody $gap={10}>
        <Tile $left={11}>Ce</Tile>
        <Small icon="cenik" label="Ceník položky" />
      </GroupBody>
    </Group>
    <Group $width={127}>
      <GroupBody $left={6}>
        <Small icon="kusovnik" label="Kusovník" />
      </GroupBody>
    </Group>
    <Group $width={95}>
      <GroupBody>
        <Tile $left={33}>Pk</Tile>
      </GroupBody>
      <RightLabel>PDM</RightLabel>
    </Group>
    <Group $width={159}>
      <GroupBody $left={2}>
        <Big icon="carove" width={46} label="Čárové" last="kódy" caret />
        <Big icon="dokumenty" width={66} label="Dokumenty" />
        <Big icon="dalsi" width={43} label="Další" last="akce" caret />
      </GroupBody>
      <GroupLabel>Ostatní</GroupLabel>
    </Group>
    <CollapseButton />
  </RibbonBar>
);

const DialogRibbon = () => (
  <RibbonBar $height={82}>
    <Group $width={199}>
      <GroupBody>
        <Big icon="novy" width={42} label="Nový" />
        <Big icon="oprava" width={44} label="Oprava" bold />
        <Big icon="zrusit" width={43} label="Zrušit" />
        <Stack $width={68}>
          <Small icon="info" label="Ext. info" />
          <Small icon="obnovit" label="Obnovit" />
          <Small icon="parametry" label="Parametry" disabled />
        </Stack>
      </GroupBody>
      <GroupLabel>Základní</GroupLabel>
    </Group>
    <Group $width={395}>
      <GroupBody>
        <Big icon="nastav" width={50} label="Nastav" />
        <Big icon="sestavy" width={48} label="Uložené" last="sestavy" caret />
        <Stack $width={166} $left={6}>
          <Small icon="filtrOff" label="Filtr dočasně zakázán" disabled />
          <Small icon="filtr" label="Jednoduchý filtr/Rozšířený filtr" />
          <Small icon="master" label="Master x Detail" caret />
        </Stack>
        <Stack $width={130}>
          <Small icon="tabulky" label="Kontingenční tabulky" caret />
          <Small icon="grafy" label="Grafy" caret />
          <Small icon="pokrocile" label="Pokročilé grafy" caret />
        </Stack>
      </GroupBody>
      <GroupLabel>Sestavy</GroupLabel>
    </Group>
    <Group $width={133}>
      <GroupBody>
        <Big icon="tisk" width={40} label="Tisk" caret />
        <Big icon="office" width={46} label="MS" last="Office" caret />
        <Big icon="export" width={44} label="Export" caret />
      </GroupBody>
      <GroupLabel>Výstupy dat</GroupLabel>
    </Group>
    <Group $width={86}>
      <GroupBody>
        <Big icon="zpravy" width={48} label="Zprávy" caret />
        <Big icon="najit" width={36} label="Najít" />
      </GroupBody>
      <GroupLabel>Ostatní</GroupLabel>
    </Group>
    <CollapseButton />
  </RibbonBar>
);

const PackagingTable = () => (
  <DataTable>
    <colgroup>
      {[30, 17, 39, 81, 129, 63, 80, 90, 92].map((w, i) => (
        <col key={i} width={w} />
      ))}
    </colgroup>
    <thead>
      <tr>
        <th />
        {heads.map((h, i) => (
          <th key={i}>
            <HeadLabel $green={h.green} $sort={h.sort}>
              {h.label}
              {h.sort && (
                <Svg width="8" height="4" viewBox="0 0 8 4">
                  <path d="M0 4h8L4 0z" fill="#555" />
                </Svg>
              )}
            </HeadLabel>
          </th>
        ))}
      </tr>
    </thead>
    <tbody>
      {rows.map((r) => (
        <Row key={r.reg} $selected={r.selected}>
          <RowHead>
            <div>
              {r.selected && <Arrow d="M1 0v5l3-2.500z" />}
              <Check aria-label={`Označit ${r.reg}`} />
            </div>
          </RowHead>
          <td>
            <Check aria-label={`P ${r.reg}`} defaultChecked={r.checked} />
          </td>
          <td>{r.sk}</td>
          <td>{r.reg}</td>
          <td>{r.name}</td>
          <Num>{r.qty}</Num>
          <Num>{r.pack}</Num>
          <td>{r.type}</td>
          <td>{r.parent}</td>
        </Row>
      ))}
    </tbody>
  </DataTable>
);

const PackagingDialog = () => (
  <Dialog role="dialog" aria-label="Obaly">
    <TitleBar $height={29} $side={2}>
      <QuickAccess>
        <Star />
        <Gap />
        <RoundButton $bg="#dedede" aria-label="Předchozí">
          <Svg width="7" height="7" viewBox="0 0 7 7" stroke="#fff" strokeWidth="1.500">
            <path d="M1 4.500 3.500 2 6 4.500" />
          </Svg>
        </RoundButton>
        <RoundButton $bg="#7b6bb0" aria-label="Další">
          <Svg width="7" height="7" viewBox="0 0 7 7" stroke="#fff" strokeWidth="1.500">
            <path d="M1 2.500 3.500 5 6 2.500" />
          </Svg>
        </RoundButton>
        <MenuCaret />
      </QuickAccess>
      <Title $color="#1f9ade">Obaly - VYR DOD-102 - Výfuk</Title>
      <Controls />
    </TitleBar>
    <Tabs $left={0}>
      <Tab $brand $width={64}>HELIOS</Tab>
      <Tab $active $width={55}>Přehled</Tab>
      <Tab $width={43}>Akce</Tab>
      <Tab $width={53}>Systém</Tab>
    </Tabs>
    <DialogRibbon />
    <DialogBody>
      <Work>
        <FilterRow>
          <ClearFilter aria-label="Zrušit filtr">
            <CloseIcon size={14} color="#aaa" width={2} />
          </ClearFilter>
          <FilterGrid>
            {filters.map(([kind, label], i) => (
              <FilterCell key={i}>
                <button aria-label={label || 'rovná se'}>
                  <CondIcon kind={kind} />
                  {label}
                </button>
                <input aria-label={`Filtr ${i + 1}`} />
              </FilterCell>
            ))}
          </FilterGrid>
        </FilterRow>
        <GridPane>
          <Fill>
            <PackagingTable />
          </Fill>
          <ScrollBar $vertical>
            <Arrow d="M0 4h5L2.500 1z" />
            <Track $vertical>
              <Thumb $vertical $size={60} $start={49} />
            </Track>
            <Arrow d="M0 1h5L2.500 4z" />
          </ScrollBar>
          <Highlight />
          <Cursor width="9" height="14" viewBox="0 0 9 14">
            <path d="M.5.500v11l2.500-2 2 4 1.500-1-2-3.500H8z" fill="#fff" stroke="#333" strokeWidth=".8" />
          </Cursor>
        </GridPane>
      </Work>
      <Splitter>
        <Svg width="2" height="14" viewBox="0 0 2 14">
          <path d="M1 0v14" stroke="#aaa" strokeWidth="2" strokeDasharray="1 2" />
        </Svg>
      </Splitter>
      <Assistant>
        <SideTab $active $height={64}>Asistent</SideTab>
      </Assistant>
    </DialogBody>
    <StatusFooter>
      <StatusCell $first $width={140}>{icons.server} NESOS22</StatusCell>
      <StatusCell $width={218}>{icons.user} NESOS\gottfried</StatusCell>
      <StatusCell $width={307}>{icons.db} EDI Dodavatel (helios008)</StatusCell>
      <StatusCell $width={164}>{icons.funnel}</StatusCell>
      <StatusCell $width={79}>{icons.count} 3|0:016</StatusCell>
      <Spacer />
      <Svg width="12" height="12" viewBox="0 0 12 12">
        <path d="M8 1h2v2H8zM4 5h2v2H4zM8 5h2v2H8zM0 9h2v2H0zM4 9h2v2H4zM8 9h2v2H8z" fill="#777" />
      </Svg>
    </StatusFooter>
  </Dialog>
);

const App = () => (
  <>
    <GlobalStyle />
    <Desktop>
      <TitleBar $height={28} $side={3}>
        <QuickAccess>
          <Star />
          <Gap />
          <MenuCaret />
        </QuickAccess>
        <Title $color="#b0b0b0">HELIOS iNuvio - Kmenové karty</Title>
        <Controls restore />
      </TitleBar>
      <TabLine>
        <Tabs $left={1}>
          <Tab $brand $width={64}>HELIOS</Tab>
          <Tab $width={61}>Automat</Tab>
          <Tab $width={55}>Přehled</Tab>
          <Tab $active $width={43}>Akce</Tab>
          <Tab $width={58}>Doplňky</Tab>
          <Tab $width={54}>Systém</Tab>
        </Tabs>
        <Alerts>
          <Svg width="14" height="14" viewBox="0 0 14 14">
            <path d="M0 0h14v14H0z" fill="#f5061d" />
            <path d="m7 2.500 5 9H2z" stroke="#fff" />
            <path d="M7 5.500V9M7 9.500v1" stroke="#fff" />
          </Svg>
          <span>1</span>
          <Gap />
          <Svg width="14" height="14" viewBox="0 0 14 14">
            <path d="M.5 1.500h13v9H5l-2.500 2.500v-2.500h-2z" fill="#b4defc" stroke="#5d95c8" />
          </Svg>
          <span>0</span>
        </Alerts>
      </TabLine>
      <MainRibbon />
      <Body>
        <Rail>
          <RailButton aria-label="Rozbalit">
            <Svg width="18" height="18" viewBox="0 0 18 18" stroke="#e6f3fc" strokeWidth="1.500">
              <circle cx="9" cy="9" r="8" />
              <path d="m7.500 5.500 3.500 3.500-3.500 3.500" />
            </Svg>
          </RailButton>
        </Rail>
        <Sidebar>
          <SearchBar>
            <button aria-label="Hledat">
              <Svg width="10" height="10" viewBox="0 0 10 10" stroke="#fff" strokeWidth="1.500">
                <circle cx="4" cy="4" r="3" />
                <path d="m6 6 3.500 3.500" />
              </Svg>
            </button>
          </SearchBar>
          <Menu>
            <MenuItem>
              <a href="#oblibene"><ArrowCircle /> Oblíbené</a>
            </MenuItem>
            <MenuItem $open>
              <a href="#sklad"><ArrowCircle down /> Sklad</a>
            </MenuItem>
            <SubMenu>
              <MenuItem>
                <a href="#karty" aria-label="Karty"><ArrowCircle /></a>
              </MenuItem>
              <MenuItem>
                <a href="#doklady" aria-label="Doklady"><ArrowCircle /></a>
              </MenuItem>
            </SubMenu>
            {menu.map((label) => (
              <MenuItem key={label}>
                <a href="#menu"><ArrowCircle /> {label}</a>
              </MenuItem>
            ))}
          </Menu>
          <SideTools>
            <Svg width="16" height="16" viewBox="0 0 16 16">
              <path d="m8 0 2 4 5-1-2 5 3 3-5 .5L9 16l-2.500-4L1 13l2-4.500L0 5l5-.5z" fill="#ee8b14" />
            </Svg>
            <Svg width="20" height="18" viewBox="0 0 20 18" stroke="#e6f3fc" strokeWidth="1.500">
              <circle cx="4" cy="4" r="2.500" />
              <path d="m15 1 3 3-3 3-3-3zM1.500 12h5v5h-5zM6.500 4H12M4 6.500V12M15 7v5" />
              <circle cx="15" cy="14.500" r="2.500" />
            </Svg>
            <Svg width="20" height="18" viewBox="0 0 20 18" stroke="#e6f3fc" strokeWidth="1.500">
              <path d="M1 7h5v4H1zM13 2h5v4h-5zM13 12h5v4h-5zM6 8.500 13 4M6 9.500l7 4.500" />
            </Svg>
            <Svg width="16" height="16" viewBox="0 0 16 16" stroke="#e6f3fc" strokeWidth="1.500">
              <path d="M1 1h14v14H1zM7.500 1v14M1 9h6.500M7.500 6H15" />
            </Svg>
          </SideTools>
        </Sidebar>
        <Content>
          <ListPane>
            <Fill />
            <HScroll size={92} />
          </ListPane>
          <RelationPane>
            <PaneTools>
              {icons.docX}
              <Divider />
              {icons.obnovit}
              {icons.house}
              <Divider />
              <Badge>1:N</Badge>
              <Badge>1:1</Badge>
            </PaneTools>
            <Tree>
              <TreeBody>
                <TreeRow $head>Odběratelé zboží a služeb (0) &lt;na vyžádání&gt;</TreeRow>
                <TreeRow>Čísla obalů pro zákazníky (0) [Číslo organizace,</TreeRow>
              </TreeBody>
              <HScroll size={69} />
            </Tree>
          </RelationPane>
          <SideTabs $width={26}>
            <SideTab $height={62}>Asistent</SideTab>
            <SideTab $height={77}>Komentáře</SideTab>
            <SideTab $height={76}>Dokumenty</SideTab>
            <SideTab $active $height={56}>Vztahy</SideTab>
          </SideTabs>
        </Content>
      </Body>
      <StatusBar>
        <Licence>PREZENTAČNÍ LICENCE</Licence>
        <StatusCell $width={136}>{icons.server} NESOS22</StatusCell>
        <StatusCell $width={205}>{icons.user} NESOS\gottfried</StatusCell>
        <StatusCell $width={291}>{icons.db} EDI Dodavatel (helios008)</StatusCell>
        <StatusCell $width={168}>{icons.house} 001 (Výroba)</StatusCell>
        <StatusCell $width={153}>{icons.funnel}</StatusCell>
        <StatusCell $width={80}>{icons.count} 1|0:000</StatusCell>
      </StatusBar>
      <PackagingDialog />
    </Desktop>
  </>
);

export default App;
